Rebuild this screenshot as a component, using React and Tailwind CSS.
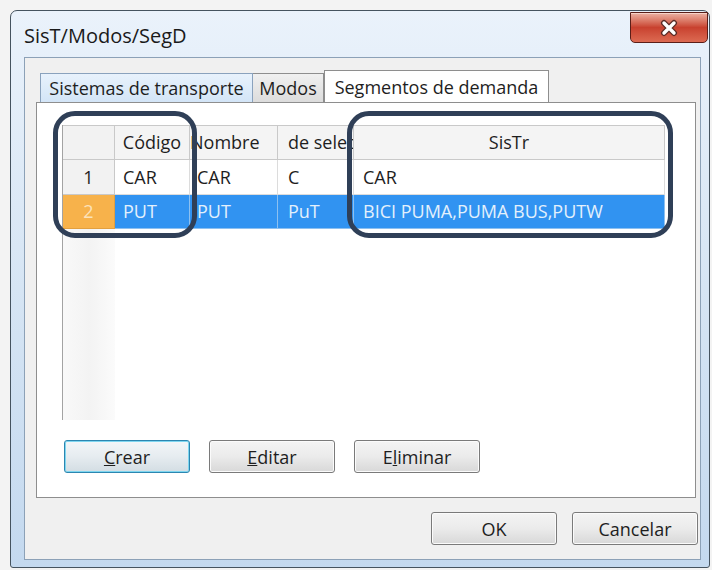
import { useState } from 'react'

const columns = [
  { key: 'code', label: 'Código', width: 'w-[75px]', head: 'justify-center', pad: 'pl-[8px]' },
  { key: 'name', label: 'Nombre', width: 'w-[88px]', head: 'justify-start', pad: 'pl-[7px]' },
  { key: 'sel', label: 'de selección', width: 'w-[76px]', head: 'justify-start pl-[10px]', pad: 'pl-[10px]' },
  { key: 'sys', label: 'SisTr', width: 'w-[311px]', head: 'justify-center', pad: 'pl-[9px]' },
]

const segments = [
  { id: 1, code: 'CAR', name: 'CAR', sel: 'C', sys: 'CAR' },
  { id: 2, code: 'PUT', name: 'PUT', sel: 'PuT', sys: 'BICI PUMA,PUMA BUS,PUTW' },
]

function CloseButton() {
  return (
    <button className="mt-[1px] mr-[1px] flex h-[31px] w-[78px] items-center justify-center rounded-b-[5px] border border-[#5b1e17] bg-gradient-to-b from-[#eab1a3] via-[#c8412f] to-[#dc6a52] shadow-[inset_0_1px_0_#f6d2c8]">
      <svg width="22" height="18" viewBox="0 0 22 18">
        <path d="M6 4 L16 14 M16 4 L6 14" stroke="#5a2a24" strokeWidth="6" strokeLinecap="round" />
        <path d="M6 4 L16 14 M16 4 L6 14" stroke="#ffffff" strokeWidth="3.4" strokeLinecap="round" />
      </svg>
    </button>
  )
}

function Button({ children, primary, className = '' }) {
  const look = primary
    ? 'border-[#2c86b0] shadow-[inset_0_0_0_1px_#7fd6f0] bg-gradient-to-b from-[#f3f6f8] via-[#e6ecf0] to-[#d3dde3]'
    : 'border-[#7a7a7a] shadow-[inset_0_0_0_1px_#fbfbfb] bg-gradient-to-b from-[#f4f4f4] via-[#ebebeb] to-[#d8d8d8]'
  return (
    <button className={`h-[33px] w-[126px] rounded-[3px] border text-[18px] leading-none text-[#1e1e1e] ${look} ${className}`}>
      {children}
    </button>
  )
}

function Tab({ label, active, className = '' }) {
  if (active) {
    return (
      <div className={`-mb-px flex h-[33px] items-center justify-center border border-b-0 border-[#8e8e8e] bg-white text-[18px] ${className}`}>
        {label}
      </div>
    )
  }
  return (
    <div className={`flex h-[29px] items-center justify-center border border-b-0 text-[18px] ${className}`}>
      {label}
    </div>
  )
}

function Grid() {
  const [selected] = useState(2)

  return (
    <div className="mt-[22px] ml-[25px] mr-[4px] flex h-[295px] flex-col border-l border-[#a3a3a3] bg-white">
      <div className="flex h-[35px]">
        <div className="w-[52px] border-t border-r border-b border-[#c9c9c9] bg-[#f2f2f2]" />
        {columns.map(col => (
          <div
            key={col.key}
            className={`${col.width} flex items-center overflow-hidden whitespace-nowrap border-t border-r border-b border-[#c9c9c9] bg-[#f4f4f4] text-[18px] ${col.head}`}
          >
            {col.label}
          </div>
        ))}
      </div>

      {segments.map(row => {
        const isSel = row.id === selected
        return (
          <div key={row.id} className={`flex ${row.id === 1 ? 'h-[35px]' : 'h-[34px]'}`}>
            <div
              className={`flex w-[52px] items-center justify-center border-r border-b text-[18px] ${
                isSel ? 'border-[#e2a040] bg-[#f7b24b] text-[#fce2ba]' : 'border-[#c9c9c9] bg-[#f2f2f2]'
              }`}
            >
              {row.id}
            </div>
            {columns.map(col => (
              <div
                key={col.key}
                className={`${col.width} ${col.pad} flex items-center overflow-hidden whitespace-nowrap border-r border-b text-[18px] ${
                  isSel ? 'border-[#8dc0f0] bg-[#3193f1] text-[#e3f0fc]' : 'border-[#dcdcdc] bg-white'
                }`}
              >
                {row[col.key]}
              </div>
            ))}
          </div>
        )
      })}

      <div className="flex flex-1">
        <div className="w-[52px] bg-gradient-to-r from-[#f9f9f9] via-[#f3f3f3] to-[#fbfbfb]" />
      </div>
    </div>
  )
}

export default function App() {
  return (
    <div className="relative h-[570px] w-[712px] overflow-hidden bg-[#f3f3f3] pt-[10px] pl-[10px] font-['Open_Sans','Noto_Sans',sans-serif] text-[#1e1e1e]">
      <div className="flex h-[558px] w-[700px] flex-col rounded-t-[7px] rounded-b-[3px] border border-[#45535f] bg-gradient-to-b from-[#eaf2fb] via-[#d6e5f4] to-[#c4d9ef]">
        {/* title bar */}
        <div className="flex h-[46px] items-start justify-between">
          <span className="pt-[13px] pl-[13px] text-[20px] leading-[24px] text-[#1a1a1a]">SisT/Modos/SegD</span>
          <CloseButton />
        </div>

        {/* client area */}
        <div className="mr-[8px] mb-[7px] ml-[13px] flex flex-1 flex-col border border-[#8ca1b7] bg-[#f0f0f0]">
          <div className="flex items-end pt-[12px] pl-[15px]">
            <Tab label="Sistemas de transporte" className="w-[213px] border-[#8aa2bd] bg-gradient-to-b from-[#e8f2fc] to-[#d3e5f7]" />
            <Tab label="Modos" className="w-[71px] border-l-0 border-[#8e8e8e] bg-gradient-to-b from-[#f0f0f0] to-[#dcdcdc]" />
            <Tab label="Segmentos de demanda" active className="w-[225px]" />
          </div>

          <div className="mr-[4px] ml-[11px] flex h-[396px] flex-col border border-[#8e8e8e] bg-white">
            <Grid />
            <div className="mt-[20px] ml-[27px] flex gap-[19px]">
              <Button primary><u>C</u>rear</Button>
              <Button><u>E</u>ditar</Button>
              <Button>E<u>l</u>iminar</Button>
            </div>
          </div>

          <div className="flex flex-1 items-center justify-end gap-[15px] pr-[2px]">
            <Button>OK</Button>
            <Button>Cancelar</Button>
          </div>
        </div>
      </div>

      {/* highlight frames drawn over the table */}
      <div className="pointer-events-none absolute top-[111px] left-[53px] h-[127px] w-[144px] rounded-[22px] border-[5px] border-[#2f3f57]" />
      <div className="pointer-events-none absolute top-[111px] left-[347px] h-[127px] w-[326px] rounded-[22px] border-[5px] border-[#2f3f57]" />
    </div>
  )
}
